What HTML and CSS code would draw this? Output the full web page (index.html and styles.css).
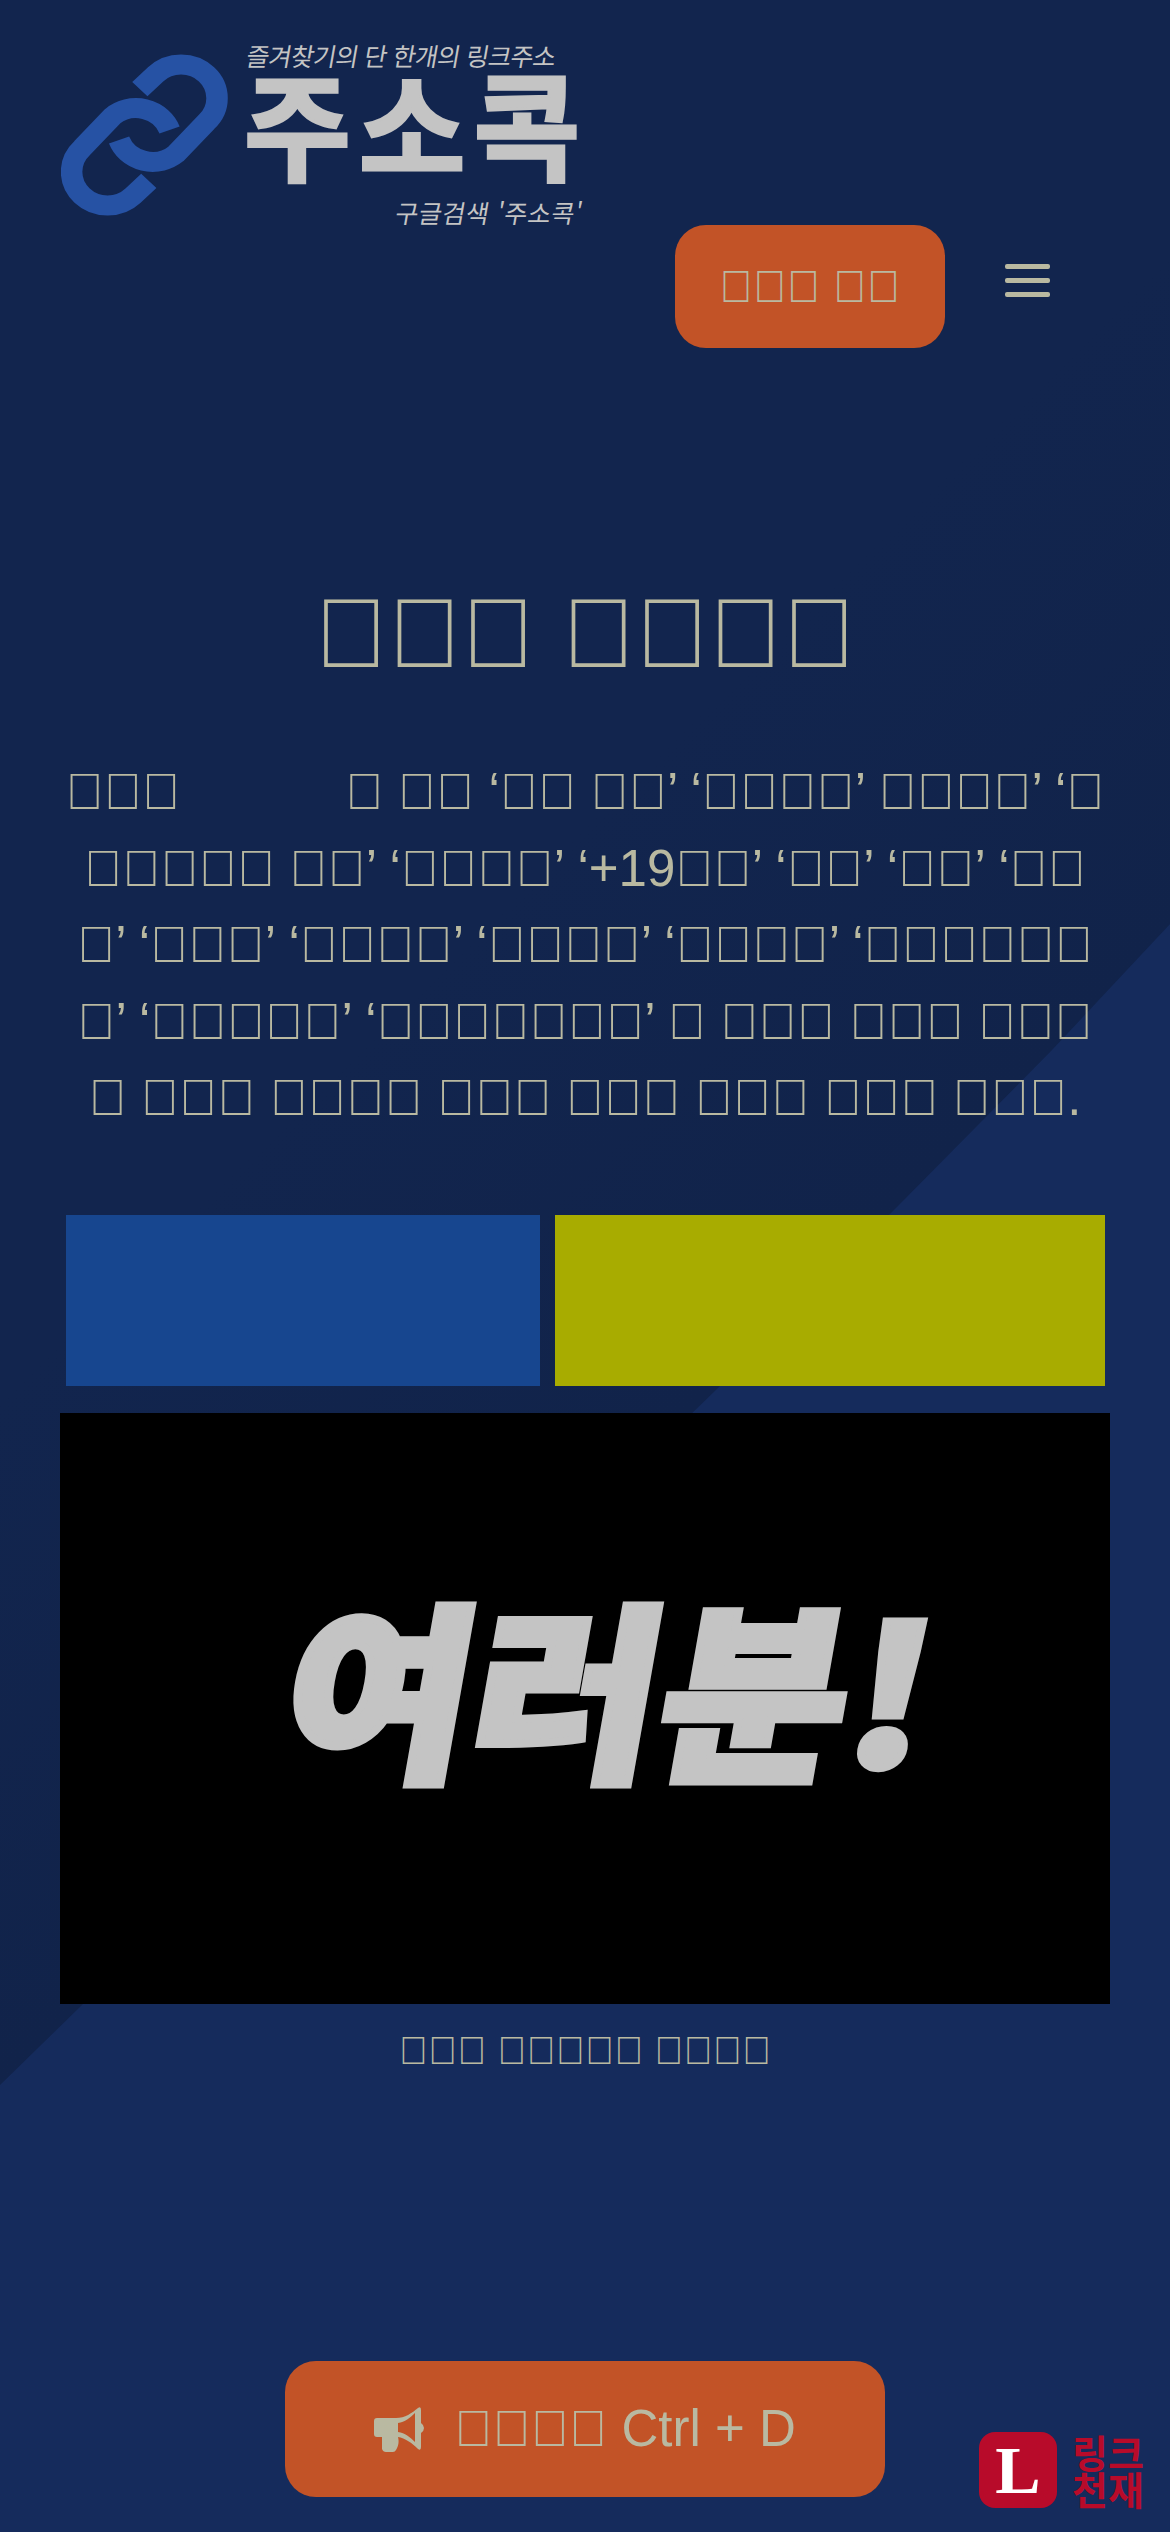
FILE: index.html
```html
<!DOCTYPE html>
<html lang="ko">
<head>
<meta charset="utf-8">
<title>주소콕</title>
<link rel="stylesheet" href="styles.css">
</head>
<body>
<div class="page">
  <header class="header">
    <a class="logo">
      <svg class="logo-icon" viewBox="60 100 466 490" preserveAspectRatio="none">
        <path d="M280 208L324 164A100 100 0 0 1 466 306L381 401A100 100 0 0 1 222 360"/>
        <path d="M305 482L261 526A100 100 0 0 1 119 384L204 289A100 100 0 0 1 363 330"/>
      </svg>
      <div class="logo-text">
        <span class="logo-tag">즐겨찾기의 단 한개의 링크주소</span>
        <span class="logo-name">주소콕</span>
        <span class="logo-search">구글검색 '주소콕'</span>
      </div>
    </a>
    <nav class="nav">
      <a class="nav-btn">&#xE000;&#xE000;&#xE000; &#xE000;&#xE000;</a>
      <button class="burger"><i></i><i></i><i></i></button>
    </nav>
  </header>
  <main class="main">
    <h1 class="title">&#xE000;&#xE000;&#xE000; &#xE000;&#xE000;&#xE000;&#xE000;</h1>
    <p class="intro">&#xE000;&#xE000;&#xE000;<span class="gap"></span> &#xE000; &#xE000;&#xE000; ‘&#xE000;&#xE000; &#xE000;&#xE000;’ ‘&#xE000;&#xE000;&#xE000;&#xE000;’ &#xE000;&#xE000;&#xE000;&#xE000;’ ‘&#xE000;<br>&#xE000;&#xE000;&#xE000;&#xE000;&#xE000; &#xE000;&#xE000;’ ‘&#xE000;&#xE000;&#xE000;&#xE000;’ ‘+19&#xE000;&#xE000;’ ‘&#xE000;&#xE000;’ ‘&#xE000;&#xE000;’ ‘&#xE000;&#xE000;<br>&#xE000;’ ‘&#xE000;&#xE000;&#xE000;’ ‘&#xE000;&#xE000;&#xE000;&#xE000;’ ‘&#xE000;&#xE000;&#xE000;&#xE000;’ ‘&#xE000;&#xE000;&#xE000;&#xE000;’ ‘&#xE000;&#xE000;&#xE000;&#xE000;&#xE000;&#xE000;<br>&#xE000;’ ‘&#xE000;&#xE000;&#xE000;&#xE000;&#xE000;’ ‘&#xE000;&#xE000;&#xE000;&#xE000;&#xE000;&#xE000;&#xE000;’ &#xE000; &#xE000;&#xE000;&#xE000; &#xE000;&#xE000;&#xE000; &#xE000;&#xE000;&#xE000;<br>&#xE000; &#xE000;&#xE000;&#xE000; &#xE000;&#xE000;&#xE000;&#xE000; &#xE000;&#xE000;&#xE000; &#xE000;&#xE000;&#xE000; &#xE000;&#xE000;&#xE000; &#xE000;&#xE000;&#xE000; &#xE000;&#xE000;&#xE000;.</p>
    <div class="tiles">
      <div class="tile tile-blue"></div>
      <div class="tile tile-yellow"></div>
    </div>
    <div class="video"><span class="video-text">여러분!</span></div>
    <p class="caption">&#xE000;&#xE000;&#xE000; &#xE000;&#xE000;&#xE000;&#xE000;&#xE000; &#xE000;&#xE000;&#xE000;&#xE000;</p>
    <a class="cta">
      <svg class="cta-icon" viewBox="0 -1 50 46">
        <path fill-rule="evenodd" d="M0 14Q0 11 3 11H22C31 11 38 6 44 1Q47-1 47 3V16Q50 18 50 21Q50 24 47 26V40Q47 44 44 42C38 36 31 31 24 30C25 34 25 38 22 43Q21 45 19 45H12Q9 45 8 42C8 38 8 34 8 30H3Q0 30 0 27ZM24 16V25C31 26 36 30 41 35V6C36 11 31 15 24 16Z"/>
      </svg>
      <span>&#xE000;&#xE000;&#xE000;&#xE000; Ctrl + D</span>
    </a>
  </main>
  <aside class="badge">
    <span class="badge-mark">L</span>
    <span class="badge-name">링크<br>천재</span>
  </aside>
</div>
</body>
</html>
```
FILE: styles.css
```css
* { box-sizing: border-box; }
html, body { margin: 0; padding: 0; }
body { font-family: "Liberation Sans", Arial, sans-serif; color: #b9b9a1; }
.page {
  position: relative;
  width: 1170px;
  height: 2532px;
  overflow: hidden;
  background: linear-gradient(135.6deg, #12254e 0, #12254e 1000px, #11234a 1490px);
}
.page::before {
  content: "";
  position: absolute;
  inset: 0;
  background: #152b5c;
  clip-path: polygon(0 2085px, 83px 2004px, 720px 1386px, 1052px 1050px, 1170px 924px, 1170px 2532px, 0 2532px);
}
.header, .main { position: relative; }
.header { padding: 43px 120px 0 61px; }
.logo { display: flex; align-items: flex-start; }
.logo-icon { width: 167px; height: 164px; margin-top: 10px; flex: none; fill: none; }
.logo-icon path { fill: none; stroke: #2652a4; stroke-width: 60; }
.logo-text { display: flex; flex-direction: column; margin-left: 19px; width: 336px; font-family: "Noto Sans CJK KR", sans-serif; color: #c4c4c4; }
.logo-tag { font-size: 25px; line-height: 24px; letter-spacing: -0.7px; transform: skewX(-10deg); white-space: nowrap; }
.logo-name { font-size: 116px; line-height: 118px; font-weight: 700; letter-spacing: 8px; -webkit-text-stroke: 3px #c4c4c4; white-space: nowrap; margin: -5px 0 0 -3px; }
.logo-search { font-size: 25px; line-height: 26px; letter-spacing: 0.5px; text-align: right; transform: skewX(-10deg); white-space: nowrap; margin-top: 19px; }
.nav { display: flex; justify-content: flex-end; align-items: flex-start; }
.nav-btn {
  display: flex; align-items: center; justify-content: center;
  width: 270px; height: 123px;
  background: #c25327; border-radius: 31px;
  font-size: 45px;
}
.burger {
  display: flex; flex-direction: column; gap: 9.5px;
  width: 105px; padding: 39px 0 0 60px;
  background: none; border: 0;
}
.burger i { display: block; width: 45px; height: 4.5px; background: #b9b9a1; border-radius: 2px; }
.main { display: flex; flex-direction: column; align-items: center; }
.title { margin: 229px 0 0; font-size: 98px; line-height: 112px; font-weight: 400; }
.intro { margin: 65px 0 0; font-size: 51px; line-height: 76.5px; text-align: center; white-space: nowrap; }
.gap { display: inline-block; width: 151px; }
.tiles { display: flex; gap: 15px; margin: 78px 0 0; width: 1039px; }
.tile { height: 171px; }
.tile-blue { width: 474px; background: #17468f; }
.tile-yellow { width: 550px; background: #a8ac00; }
.video {
  display: flex; align-items: center; justify-content: center;
  width: 1050px; height: 591px; margin-top: 27px; padding: 0 0 48px 54px; background: #000;
}
.video-text {
  font-family: "Noto Sans CJK KR", sans-serif; font-weight: 900; font-size: 190px; line-height: 1;
  color: #c4c4c4; -webkit-text-stroke: 8px #c4c4c4; letter-spacing: 1px; transform: skewX(-10deg) scaleX(1.07);
}
.caption { margin: 24px 0 0; font-size: 39px; line-height: 45px; }
.cta {
  display: flex; align-items: center; justify-content: center; gap: 30px;
  width: 600px; height: 136px; margin-top: 288px;
  background: #c25327; border-radius: 31px;
  font-size: 51px;
}
.cta-icon { width: 50px; height: 46px; fill: #b9b9a1; }
.badge { position: absolute; left: 979px; top: 2432px; display: flex; align-items: center; gap: 15px; }
.badge-mark {
  display: flex; align-items: center; justify-content: center;
  width: 78px; height: 76px; border-radius: 16px;
  background: #b80b2a; color: #fff;
  font-family: "Liberation Serif", serif; font-weight: 700; font-size: 68px;
}
.badge-name { font-family: "Noto Sans CJK KR", sans-serif; font-weight: 700; font-size: 39px; line-height: 37px; color: #b80b2a; }
```
